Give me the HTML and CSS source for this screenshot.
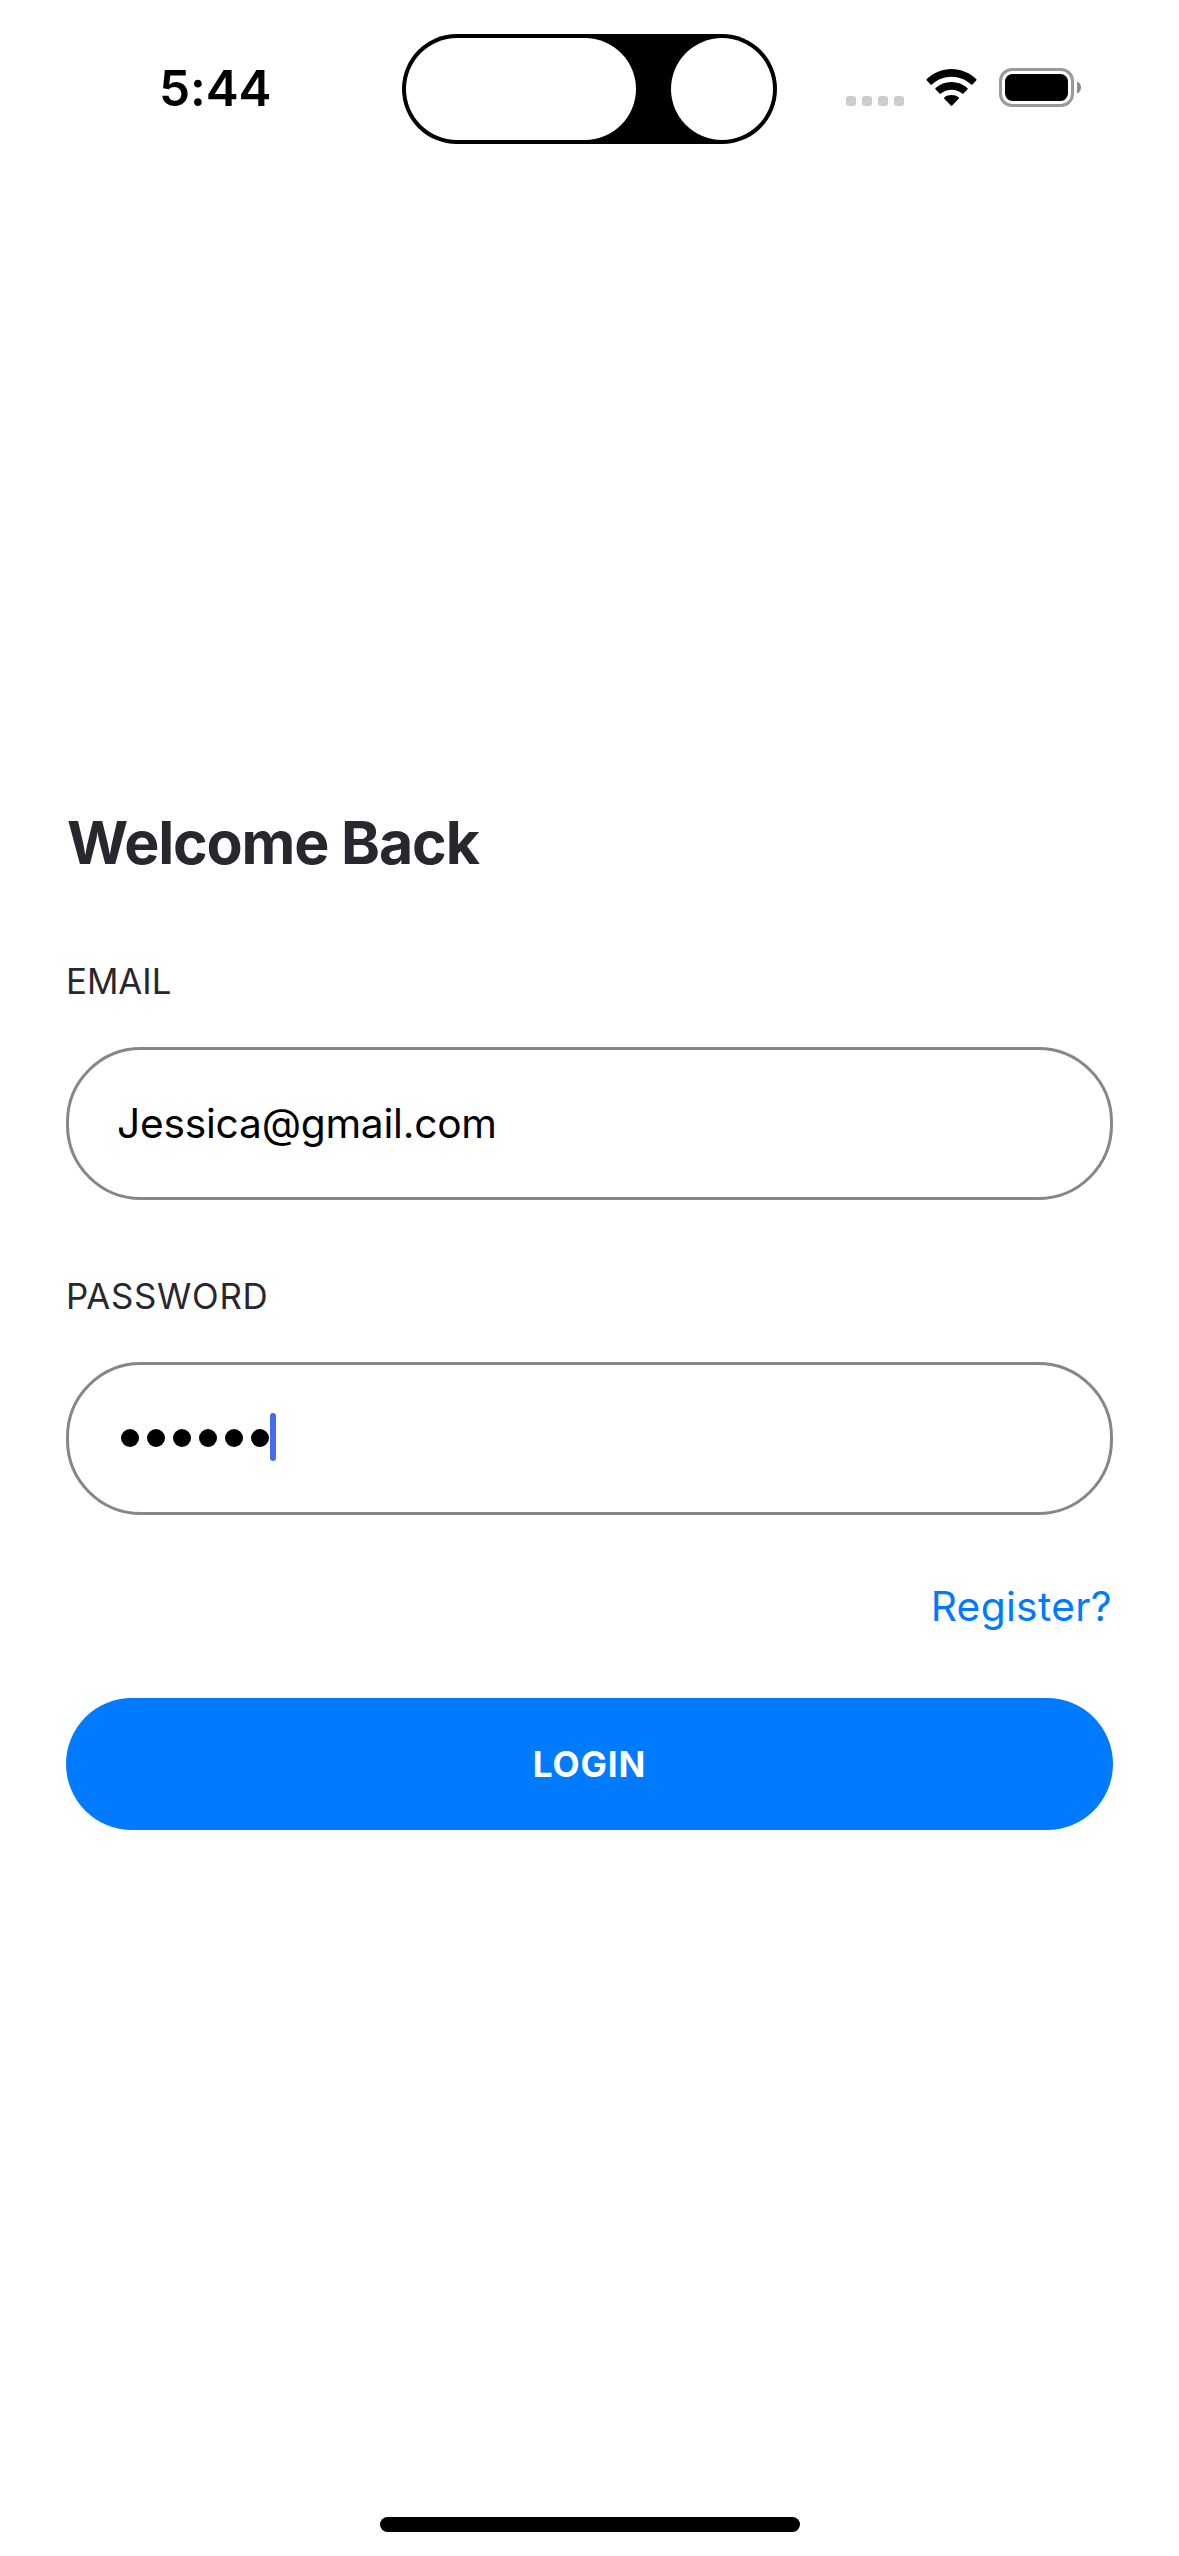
FILE: index.html
```html
<!DOCTYPE html>
<html lang="en">
<head>
<meta charset="utf-8">
<title>Login</title>
<link rel="stylesheet" href="styles.css">
</head>
<body>
<div class="screen">
  <header class="status-bar">
    <div class="time">5:44</div>
    <div class="island">
      <div class="island-main"></div>
      <div class="island-camera"></div>
    </div>
    <div class="indicators">
      <div class="signal"><i></i><i></i><i></i><i></i></div>
      <svg class="wifi" width="51" height="38" viewBox="0 0 52 38" preserveAspectRatio="none" aria-hidden="true">
        <path d="M.8 11.6Q0 10.8.8 10C7.700 3.700 16.500 0 26 0S44.300 3.700 51.200 10Q52 10.800 51.200 11.600L47.300 15.400Q46.600 16 45.900 15.400C40.500 10.500 33.600 7.700 26 7.700S11.500 10.500 6.100 15.400Q5.400 16 4.700 15.400Z"/>
        <path d="M9.800 20.600Q9 19.800 9.800 19.100C14.200 15.200 19.800 13 26 13S37.800 15.200 42.200 19.100Q43 19.800 42.200 20.600L38.200 24.500Q37.600 25.100 36.900 24.500C33.900 22.100 30.200 20.700 26 20.700S18.100 22.100 15.100 24.500Q14.400 25.100 13.800 24.500Z"/>
        <path d="M18.700 29.700Q18 29 18.800 28.300C20.800 26.800 23.200 26 26 26S31.200 26.800 33.200 28.300Q34 29 33.300 29.700L26.700 36.400Q26 37.100 25.300 36.400Z"/>
      </svg>
      <svg class="battery" width="83" height="39" viewBox="0 0 83 39" aria-hidden="true">
        <rect x="1.500" y="1.500" width="72" height="36" rx="11.500" fill="none" stroke="#999" stroke-width="3"/>
        <rect x="6" y="6" width="63" height="27" rx="7.500"/>
        <path d="M78 13.500C80.600 14.500 82 16.800 82 19.500S80.600 24.500 78 25.500Z" fill="#8c8c8c"/>
      </svg>
    </div>
  </header>

  <main class="login">
    <h1>Welcome Back</h1>
    <div class="label">EMAIL</div>
    <div class="field"><span class="email">Jessica@gmail.com</span></div>
    <div class="label label-password">PASSWORD</div>
    <div class="field">
      <div class="mask"><i></i><i></i><i></i><i></i><i></i><i></i></div>
      <div class="caret"></div>
    </div>
    <a class="register">Register?</a>
    <button class="submit" type="button">LOGIN</button>
  </main>

  <div class="home-indicator"></div>
</div>
</body>
</html>
```
FILE: styles.css
```css
* {
  box-sizing: border-box;
}

body {
  margin: 0;
  background: #fff;
  font-family: Inter, "Liberation Sans", sans-serif;
  color: #000;
}

.screen {
  width: 1179px;
  height: 2556px;
  display: flex;
  flex-direction: column;
  overflow: hidden;
}

.status-bar {
  height: 177px;
  padding-top: 34px;
  display: flex;
  align-items: flex-start;
}

.time {
  width: 402px;
  height: 108px;
  padding-left: 159px;
  font-size: 49.5px;
  font-weight: 600;
  line-height: 108px;
  letter-spacing: -0.1px;
}

.island {
  width: 375px;
  height: 110px;
  padding: 4px;
  display: flex;
  justify-content: space-between;
  border-radius: 55px;
  background: #000;
}

.island-main {
  width: 230px;
  height: 102px;
  border-radius: 51px;
  background: #fff;
}

.island-camera {
  width: 102px;
  height: 102px;
  border-radius: 50%;
  background: #fff;
}

.indicators {
  display: flex;
  align-items: flex-start;
  padding: 34px 0 0 69px;
}

.signal {
  display: flex;
  gap: 6px;
  padding-top: 28px;
}

.signal i {
  width: 10px;
  height: 10px;
  border-radius: 3px;
  background: #ccc;
}

.wifi {
  margin: 1px 0 0 22px;
}

.battery {
  margin-left: 22px;
}

.login {
  width: 1047px;
  margin: 630px auto 0;
  display: flex;
  flex-direction: column;
}

h1 {
  margin: 0 0 80px;
  padding-left: 1px;
  font-size: 59px;
  font-weight: 700;
  line-height: 72px;
  letter-spacing: -1.15px;
  color: #29262e;
}

.label {
  margin-bottom: 44px;
  font-size: 34.8px;
  line-height: 44px;
  color: #29262e;
}

.label-password {
  margin-top: 74px;
  letter-spacing: 0.7px;
}

.field {
  height: 153px;
  padding-left: 48px;
  display: flex;
  align-items: center;
  border: 3px solid #868686;
  border-radius: 75px;
}

.email {
  font-size: 40.7px;
  line-height: 50px;
  letter-spacing: -0.23px;
}

.mask {
  display: flex;
  gap: 8px;
  padding: 0 0 1px 4px;
}

.mask i {
  width: 18px;
  height: 18px;
  border-radius: 50%;
  background: #000;
}

.caret {
  width: 6px;
  height: 48px;
  margin: 0 0 3px 1px;
  border-radius: 3px;
  background: #426bf2;
}

.register {
  align-self: flex-end;
  margin: 67px 1px 66px 0;
  font-size: 40.7px;
  line-height: 50px;
  letter-spacing: 0.33px;
  color: #007aff;
}

.submit {
  height: 132px;
  padding: 0;
  border: 0;
  border-radius: 66px;
  background: #007aff;
  color: #fff;
  font-family: inherit;
  font-size: 35.2px;
  font-weight: 700;
  letter-spacing: 0.9px;
}

.home-indicator {
  width: 420px;
  height: 15px;
  margin: auto auto 24px 380px;
  border-radius: 7.5px;
  background: #000;
}
```
